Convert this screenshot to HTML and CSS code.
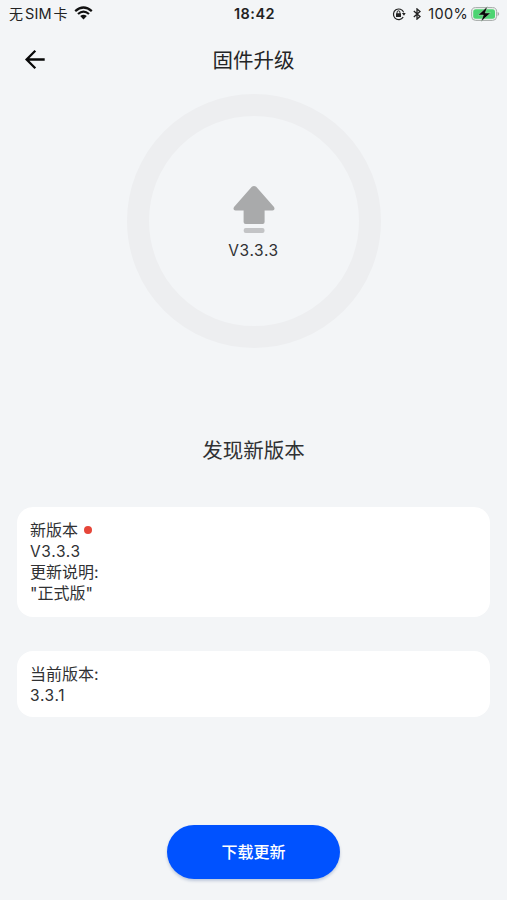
FILE: index.html
```html
<!DOCTYPE html>
<html lang="zh-CN">
<head>
<meta charset="utf-8">
<title>固件升级</title>
<link rel="stylesheet" href="styles.css">
</head>
<body>
<div class="status">
  <div class="status-left">
    <span class="carrier">无<span class="sim">SIM</span>卡</span>
    <svg class="wifi" width="19" height="14" viewBox="0 0 19 14"><path d="M1.2 5.1Q9.5-2.1 17.8 5.1M4 8Q9.5 3.3 15 8" fill="none" stroke="#111" stroke-width="2.3"/><path d="M6.2 10.1Q9.5 7.5 12.8 10.1L9.5 13.4Z" fill="#111"/></svg>
  </div>
  <div class="clock">18:42</div>
  <div class="status-right">
    <svg width="14" height="14" viewBox="0 0 14 14"><path d="M11.2 10.2A5.3 5.3 0 1 1 11.7 5.4" fill="none" stroke="#222" stroke-width="1.2"/><path d="M9.9 6h3.8l-1.7 2.8zM4 6.3h5v3.7H4z" fill="#222"/><path d="M5.1 6.6V5.2a1.4 1.4 0 0 1 2.8 0v1.4" fill="none" stroke="#222" stroke-width="1"/></svg>
    <svg class="bluetooth" width="8" height="12" viewBox="0 0 8 12"><path d="M.8 3.1 7 8.6 4 11.1V.9L7 3.4.8 8.9" fill="none" stroke="#222" stroke-width="1.3"/></svg>
    <span class="percent">100%</span>
    <svg width="29" height="16" viewBox="0 0 29 16"><rect x=".6" y="1.6" width="25" height="12.8" rx="4" fill="#edf2ee" stroke="#a5a9a8" stroke-width="1"/><rect x="2.2" y="3.2" width="21.8" height="9.6" rx="2.5" fill="#4cd471"/><path d="M26.6 5.8q3.2 2.2 0 4.4z" fill="#a5a9a8"/><path d="M16.4.6 7.2 9h5.2l-2.3 6.4L19.5 7h-5.3z" fill="#080808" stroke="#d5f5dc" stroke-width=".4"/></svg>
  </div>
</div>
<header class="nav">
  <svg class="back" width="22" height="22" viewBox="0 0 22 22"><path d="M20.7 10.5H2.7M11.3 1.8 2.6 10.5l8.7 8.7" fill="none" stroke="#080808" stroke-width="2.3"/></svg>
  <h1>固件升级</h1>
</header>
<main>
  <div class="ring">
    <svg width="42" height="49" viewBox="0 0 42 49"><path d="M18.8 1.8Q21 0 23.2 1.8L41 22Q42.5 25 39.5 25.5H31.6V37Q31.6 39 29.6 39H12.6Q10.6 39 10.6 37V25.5H2.5Q-.5 25 1 22Z" fill="#a9aaab"/><rect x="10.7" y="43" width="20.8" height="5" rx="2" fill="#c3c4c6"/></svg>
    <span>V3.3.3</span>
  </div>
  <h2>发现新版本</h2>
  <section class="card next">
    <p>新版本<i class="dot"></i></p>
    <p class="num">V3.3.3</p>
    <p>更新说明:</p>
    <p>"正式版"</p>
  </section>
  <section class="card current">
    <p>当前版本:</p>
    <p class="num">3.3.1</p>
  </section>
  <button class="download">下载更新</button>
</main>
</body>
</html>
```
FILE: styles.css
```css
* { box-sizing: border-box; }
body {
  margin: 0;
  height: 900px;
  overflow: hidden;
  background: #f3f5f7;
  color: #303133;
  font-family: Inter, "Noto Sans CJK SC", sans-serif;
}
h1, h2, p { margin: 0; font-weight: 400; }
svg { display: block; flex: none; }
.status {
  height: 28px;
  display: grid;
  grid-template-columns: 1fr auto 1fr;
  align-items: center;
  padding: 0 7px 0 9px;
  font-size: 14.5px;
  line-height: 28px;
  color: #222;
}
.status-left, .status-right { display: flex; align-items: center; height: 28px; }
.status-right { justify-content: flex-end; }
.carrier { font-size: 14px; white-space: nowrap; }
.sim { font-size: 14.5px; margin: 0 2px; letter-spacing: .1px; }
.wifi { margin-left: 6px; margin-top: -2px; }
.clock { font-weight: 600; font-size: 14.5px; letter-spacing: .5px; }
.bluetooth { margin-left: 7px; }
.percent { margin: 0 3px 0 7px; letter-spacing: .3px; }
.nav {
  height: 64px;
  display: grid;
  grid-template-columns: 1fr auto 1fr;
  align-items: center;
  padding: 2px 24px 0;
}
.nav h1 { font-size: 20.5px; line-height: 30px; color: #242526; }
.back { margin-top: -2px; }
main { display: flex; flex-direction: column; align-items: center; padding: 2px 17px 0; }
.ring {
  width: 254px;
  height: 254px;
  border: 22px solid #edeef0;
  border-radius: 50%;
  display: flex;
  flex-direction: column;
  align-items: center;
  padding-top: 69px;
}
.ring span { margin-top: 7px; font-size: 15.5px; line-height: 20px; letter-spacing: .6px; }
h2 { margin-top: 88px; font-size: 20.5px; line-height: 30px; }
.card {
  width: 473px;
  border-radius: 16px;
  background: #fff;
  padding: 13px;
  font-size: 16px;
  line-height: 21px;
}
.card p { height: 21px; white-space: nowrap; }
.card .num { font-size: 15.5px; letter-spacing: .65px; }
.next { height: 110px; margin-top: 41px; }
.current { height: 66px; margin-top: 34px; }
.dot {
  display: inline-block;
  width: 8px;
  height: 8px;
  margin-left: 6px;
  border-radius: 50%;
  background: #e64639;
  vertical-align: 2px;
}
.download {
  width: 173px;
  height: 54px;
  margin-top: 108px;
  padding: 0;
  border: 0;
  border-radius: 27px;
  background: #0052ff;
  box-shadow: 0 2px 3px rgba(35, 70, 140, .25);
  color: #fff;
  font: 500 16px/54px Inter, "Noto Sans CJK SC", sans-serif;
}
```
